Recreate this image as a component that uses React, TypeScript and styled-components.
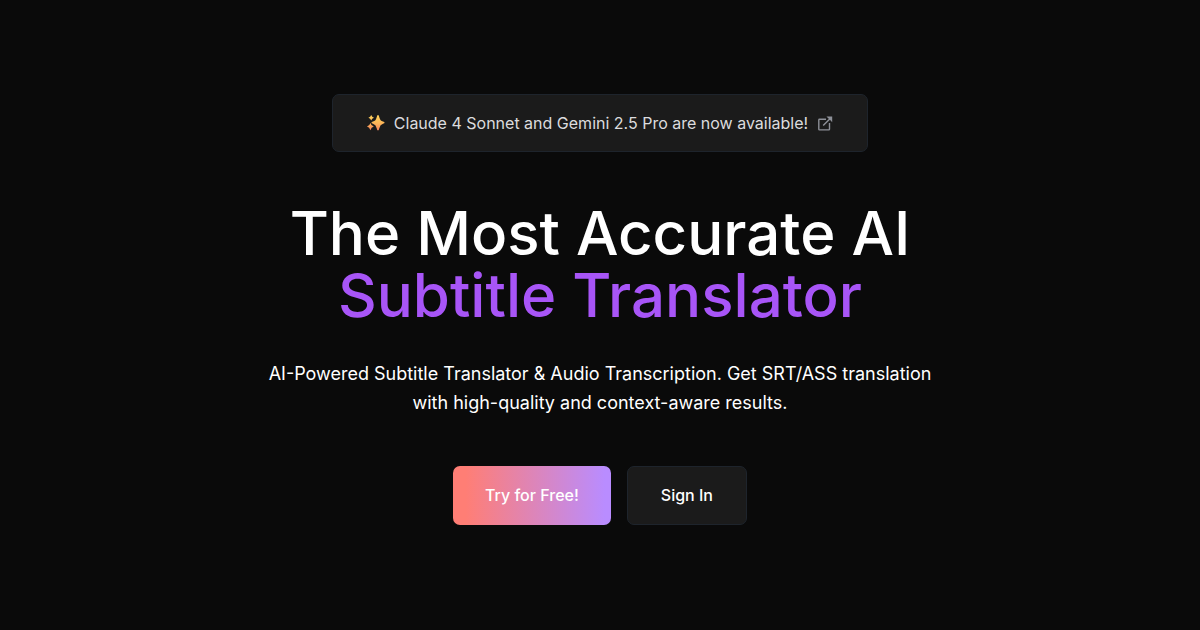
import React from "react";
import styled, { createGlobalStyle, css } from "styled-components";

const GlobalStyle = createGlobalStyle`
  *, *::before, *::after { box-sizing: border-box; }
  body {
    margin: 0;
    background: #0a0a0a;
    color: #fff;
    font-family: Inter, "Liberation Sans", sans-serif;
  }
`;

const Hero = styled.main`
  display: flex;
  flex-direction: column;
  align-items: center;
  min-height: 100vh;
  padding: 94px 24px 64px;
  text-align: center;
`;

const surface = css`
  background: #1b1b1b;
  border: 1px solid #1e242c;
  border-radius: 7px;
`;

const Announcement = styled.a`
  ${surface}
  display: flex;
  align-items: center;
  gap: 9px;
  min-height: 58px;
  padding: 0 33px 0 34px;
  color: #dcdcde;
  font-size: 16px;
  line-height: 24px;
  text-decoration: none;
`;

const Icon = styled.svg`
  flex: none;
  color: #8d9098;
`;

const Title = styled.h1`
  margin: 50px 0 0;
  font-size: 60px;
  font-weight: 500;
  line-height: 62px;
`;

const Accent = styled.span`
  display: block;
  color: #a855f7;
`;

const Lead = styled.p`
  max-width: 680px;
  margin: 33px 0 0;
  font-size: 18px;
  line-height: 29px;
`;

const Actions = styled.div`
  display: flex;
  flex-wrap: wrap;
  justify-content: center;
  gap: 16px;
  margin-top: 49px;
`;

const Button = styled.button<{ $primary?: boolean }>`
  ${surface}
  min-height: 59px;
  padding: 0 33px 2px;
  color: #fff;
  font: 500 16px/24px Inter, "Liberation Sans", sans-serif;
  cursor: pointer;
  ${({ $primary }) =>
    $primary &&
    css`
      padding: 0 32px 2px;
      border: 0;
      background: linear-gradient(90deg, #ff7e75 0%, #ff7e75 8%, #b98cff 96%);
    `}
`;

const Sparkles = () => (
  <Icon width="18" height="18" viewBox="0 0 18 18" aria-hidden="true">
    <defs>
      <linearGradient id="spark" x1="0" y1="0" x2="0" y2="18" gradientUnits="userSpaceOnUse">
        <stop offset="0" stopColor="#ffd65c" />
        <stop offset="0.5" stopColor="#fdb758" />
        <stop offset="1" stopColor="#f5785f" />
      </linearGradient>
    </defs>
    <g fill="url(#spark)">
      <path d="M11 1Q11.9 1 12.3 3.2Q13.1 6.8 16 7.6Q17.6 8 17.6 8.7T16 9.8Q13.1 10.7 12.3 14.2Q11.9 16.4 11 16.4T9.7 14.2Q8.9 10.7 6 9.8Q4.4 9.4 4.4 8.7T6 7.6Q8.9 6.8 9.7 3.2Q10.1 1 11 1Z" />
      <path d="M4.2 1Q4.9 3 7 3.8Q4.9 4.6 4.2 6.6Q3.5 4.6 1.4 3.8Q3.5 3 4.2 1Z" />
      <path d="M3.4 9Q4.2 11.8 6.8 12.6Q4.2 13.4 3.4 16.2Q2.6 13.4 0 12.6Q2.6 11.8 3.4 9Z" />
    </g>
  </Icon>
);

const ExternalLink = () => (
  <Icon width="17" height="17" viewBox="0 0 17 17" fill="none" stroke="currentColor" aria-hidden="true">
    <path
      d="M9 4.2H2.5Q1.8 4.2 1.8 4.9V14.2Q1.8 14.9 2.5 14.9H11.8Q12.5 14.9 12.5 14.2V8M6.2 10.6L13 3.8"
      strokeWidth="1.4"
    />
    <path d="M9.5 1.5H15.2V7.2L13.6 5.6L11.2 3.2Z" fill="currentColor" stroke="none" />
  </Icon>
);

export default function App() {
  return (
    <>
      <GlobalStyle />
      <Hero>
        <Announcement href="#models">
          <Sparkles />
          <span>Claude 4 Sonnet and Gemini 2.5 Pro are now available!</span>
          <ExternalLink />
        </Announcement>
        <Title>
          The Most Accurate AI
          <Accent>Subtitle Translator</Accent>
        </Title>
        <Lead>
          AI-Powered Subtitle Translator &amp; Audio Transcription. Get SRT/ASS translation
          with high-quality and context-aware results.
        </Lead>
        <Actions>
          <Button type="button" $primary>Try for Free!</Button>
          <Button type="button">Sign In</Button>
        </Actions>
      </Hero>
    </>
  );
}
